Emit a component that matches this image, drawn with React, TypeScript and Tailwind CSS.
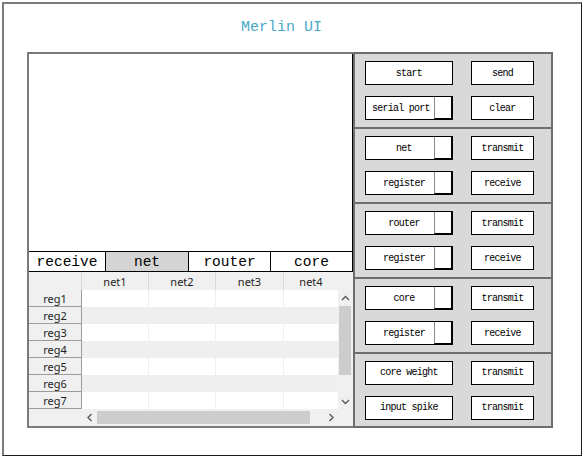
import React from "react";

const mono = "font-['Liberation_Mono',monospace]";
const sans = "font-['Noto_Sans',sans-serif]";

function Chevron({ dir }: { dir: "up" | "down" | "left" | "right" }) {
  const pts: Record<string, string> = {
    up: "1,5 4.5,1.5 8,5",
    down: "1,2 4.5,5.5 8,2",
    left: "5.5,1 2,4.5 5.5,8",
    right: "2.5,1 6,4.5 2.5,8",
  };
  const vert = dir === "up" || dir === "down";
  return (
    <svg width={vert ? 9 : 8} height={vert ? 7 : 9} viewBox={vert ? "0 0 9 7" : "0 0 8 9"}>
      <polyline points={pts[dir]} fill="none" stroke="#5a5a5a" strokeWidth="1.4" />
    </svg>
  );
}

function LeftBtn({ label, toggle }: { label: string; toggle?: boolean }) {
  const long = label.length > 8;
  return (
    <div className={`w-[88px] h-[24px] border border-black bg-white flex items-stretch text-[10px] tracking-[-0.75px] text-black ${mono}`}>
      {toggle ? (
        <>
          <div className={`flex-1 flex items-center justify-center ${long ? "pl-[2px]" : "pl-[8px]"} pt-px leading-none`}>{label}</div>
          <div className="w-[18px] bg-white border-l border-l-[#8a8a8a] border-r border-b border-r-black border-b-black" />
        </>
      ) : (
        <div className="flex-1 flex items-center justify-center pt-px leading-none">{label}</div>
      )}
    </div>
  );
}

function RightBtn({ label }: { label: string }) {
  return (
    <div className={`w-[63px] h-[24px] border border-black bg-white flex items-center justify-center pt-px text-[10px] tracking-[-0.75px] text-black leading-none ${mono}`}>
      {label}
    </div>
  );
}

function Section({
  rows,
  last,
}: {
  rows: { left: string; toggle?: boolean; right: string }[];
  last?: boolean;
}) {
  return (
    <div
      className={`${last ? "flex-1" : "h-[75px] border-b-2 border-[#6e6e6e]"} flex flex-col justify-center gap-[11px] pl-[10px]`}
    >
      {rows.map((r) => (
        <div key={r.left} className="flex items-center gap-[18px]">
          <LeftBtn label={r.left} toggle={r.toggle} />
          <RightBtn label={r.right} />
        </div>
      ))}
    </div>
  );
}

const colW = ["w-[67px]", "w-[67px]", "w-[68px]", "w-[54px]"];
const heads = ["net1", "net2", "net3", "net4"];
const regs = ["reg1", "reg2", "reg3", "reg4", "reg5", "reg6", "reg7"];

export default function App() {
  return (
    <div className="w-[586px] h-[460px] bg-white overflow-hidden">
      <div className="ml-[2px] mt-[2px] w-[580px] h-[454px] border-t-2 border-l-2 border-t-[#7b7b7b] border-l-[#7b7b7b] border-r border-b border-r-[#1a1a1a] border-b-[#1a1a1a] flex flex-col">
        <div className="h-[48px] pt-[14px] pl-[237px]">
          <div className={`text-[15px] leading-[20px] text-[#4aa8c8] ${mono}`}>Merlin UI</div>
        </div>
        <div className="ml-[23px] w-[526px] h-[376px] flex">
          {/* Left panel */}
          <div className="w-[326px] h-full border-t-2 border-l-2 border-b-2 border-[#7b7b7b] flex flex-col">
            <div className="h-[197px] bg-white border-r border-black" />
            <div className={`h-[21px] border-t border-b border-black flex text-[14.5px] text-black ${mono}`}>
              <div className="w-[77px] border-r border-black flex items-center justify-center pt-px leading-none">receive</div>
              <div className="w-[83px] border-r border-black bg-[#d4d4d4] flex items-center justify-center pt-px leading-none">net</div>
              <div className="w-[82px] border-r border-black flex items-center justify-center pt-px leading-none">router</div>
              <div className="w-[82px] border-r border-black flex items-center justify-center pt-px leading-none">core</div>
            </div>
            <div className={`flex-1 flex flex-col text-[11px] text-[#1e1e1e] ${sans}`}>
              {/* header */}
              <div className="h-[18px] flex bg-[#f0f0f0]">
                <div className="w-[53px] border-r border-[#d8d8d8]" />
                {heads.map((h, i) => (
                  <div key={h} className={`${colW[i]} ${i < 3 ? "border-r border-[#d8d8d8]" : ""} flex items-center justify-center leading-none`}>
                    {h}
                  </div>
                ))}
                <div className="flex-1 bg-[#f0f0f0]" />
              </div>
              {/* body */}
              <div className="flex h-[119px]">
                <div className="w-[309px] flex flex-col">
                  {regs.map((r, ri) => (
                    <div key={r} className="h-[17px] flex">
                      <div className="w-[53px] bg-[#f0f0f0] border-b border-r border-[#9c9c9c] flex items-center justify-center leading-none">
                        {r}
                      </div>
                      {colW.map((w, ci) => (
                        <div
                          key={ci}
                          className={`${w} ${ri % 2 === 0 ? "bg-white" : "bg-[#efefef]"} ${ci < 3 ? "border-r border-[#efefef]" : ""}`}
                        />
                      ))}
                    </div>
                  ))}
                </div>
                <div className="w-[15px] bg-[#f0f0f0] flex flex-col">
                  <div className="h-[16px] flex items-center justify-center">
                    <Chevron dir="up" />
                  </div>
                  <div className="ml-[1px] w-[12px] h-[69px] bg-[#cdcdcd]" />
                  <div className="flex-1" />
                  <div className="h-[16px] flex items-center justify-center">
                    <Chevron dir="down" />
                  </div>
                </div>
              </div>
              {/* horizontal scrollbar */}
              <div className="flex-1 flex bg-[#f0f0f0]">
                <div className="w-[53px]" />
                <div className="w-[15px] flex items-center justify-center">
                  <Chevron dir="left" />
                </div>
                <div className="w-[213px] h-[13px] self-center bg-[#cdcdcd]" />
                <div className="flex-1" />
                <div className="w-[15px] flex items-center justify-center">
                  <Chevron dir="right" />
                </div>
                <div className="w-[15px]" />
              </div>
            </div>
          </div>
          {/* Right panel */}
          <div className="w-[200px] h-full bg-[#d9d9d9] border-2 border-[#6e6e6e] flex flex-col">
            <Section
              rows={[
                { left: "start", right: "send" },
                { left: "serial port", toggle: true, right: "clear" },
              ]}
            />
            <Section
              rows={[
                { left: "net", toggle: true, right: "transmit" },
                { left: "register", toggle: true, right: "receive" },
              ]}
            />
            <Section
              rows={[
                { left: "router", toggle: true, right: "transmit" },
                { left: "register", toggle: true, right: "receive" },
              ]}
            />
            <Section
              rows={[
                { left: "core", toggle: true, right: "transmit" },
                { left: "register", toggle: true, right: "receive" },
              ]}
            />
            <Section
              last
              rows={[
                { left: "core weight", right: "transmit" },
                { left: "input spike", right: "transmit" },
              ]}
            />
          </div>
        </div>
      </div>
    </div>
  );
}
